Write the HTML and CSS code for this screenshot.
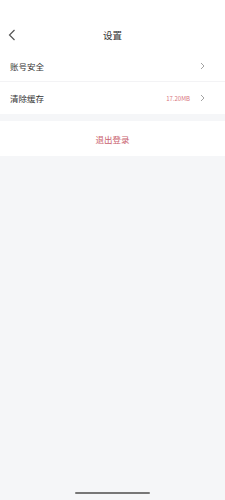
FILE: index.html
```html
<!DOCTYPE html>
<html lang="zh">
<head>
<meta charset="utf-8">
<link rel="stylesheet" href="styles.css">
</head>
<body>
<div class="page">
  <div class="status"></div>
  <div class="nav">
    <svg class="back" width="8" height="12" viewBox="0 0 8 12"><path d="M6.5 1 L1.5 6 L6.5 11" fill="none" stroke="#555" stroke-width="1.2"/></svg>
    <div class="title">设置</div>
  </div>
  <div class="list">
    <div class="row">
      <span class="label">账号安全</span>
      <svg class="arrow" width="5" height="8" viewBox="0 0 5 8"><path d="M1 1 L4 4 L1 7" fill="none" stroke="#999" stroke-width="0.9"/></svg>
    </div>
    <div class="row">
      <span class="label">清除缓存</span>
      <span class="value">17.20MB</span>
      <svg class="arrow" width="5" height="8" viewBox="0 0 5 8"><path d="M1 1 L4 4 L1 7" fill="none" stroke="#999" stroke-width="0.9"/></svg>
    </div>
  </div>
  <div class="logout">退出登录</div>
  <div class="rest"></div>
  <div class="home"></div>
</div>
</body>
</html>
```
FILE: styles.css
```css
* { box-sizing: border-box; }
html, body { margin: 0; padding: 0; }
body {
  background: #f5f6f8;
  font-family: "Noto Sans CJK SC", "Noto Sans", sans-serif;
  width: 225px;
  height: 500px;
  overflow: hidden;
}
.page {
  position: relative;
  width: 225px;
  height: 500px;
  display: flex;
  flex-direction: column;
}
.status {
  height: 24px;
  background: #fff;
}
.nav {
  height: 26px;
  background: #fff;
  display: flex;
  align-items: center;
  justify-content: center;
  position: relative;
}
.back {
  position: absolute;
  left: 8px;
  top: 5px;
}
.title {
  font-size: 9.5px;
  color: #333;
  margin-top: -4px;
}
.list {
  background: #fff;
}
.row {
  height: 32px;
  display: flex;
  align-items: center;
  padding: 0 20px 0 10px;
  border-bottom: 1px solid #f3f3f5;
}
.row:last-child { border-bottom: none; }
.label {
  font-size: 8.5px;
  color: #333;
  flex: 1;
}
.value {
  font-size: 6px;
  color: #d9737d;
  margin-right: 10px;
}
.arrow { display: block; }
.logout {
  margin-top: 7px;
  height: 35px;
  background: #fff;
  display: flex;
  align-items: center;
  justify-content: center;
  font-size: 8.5px;
  color: #c9616d;
}
.rest { flex: 1; }
.home {
  position: absolute;
  left: 75px;
  bottom: 6px;
  width: 75px;
  height: 2px;
  border-radius: 1px;
  background: #777;
}
```
